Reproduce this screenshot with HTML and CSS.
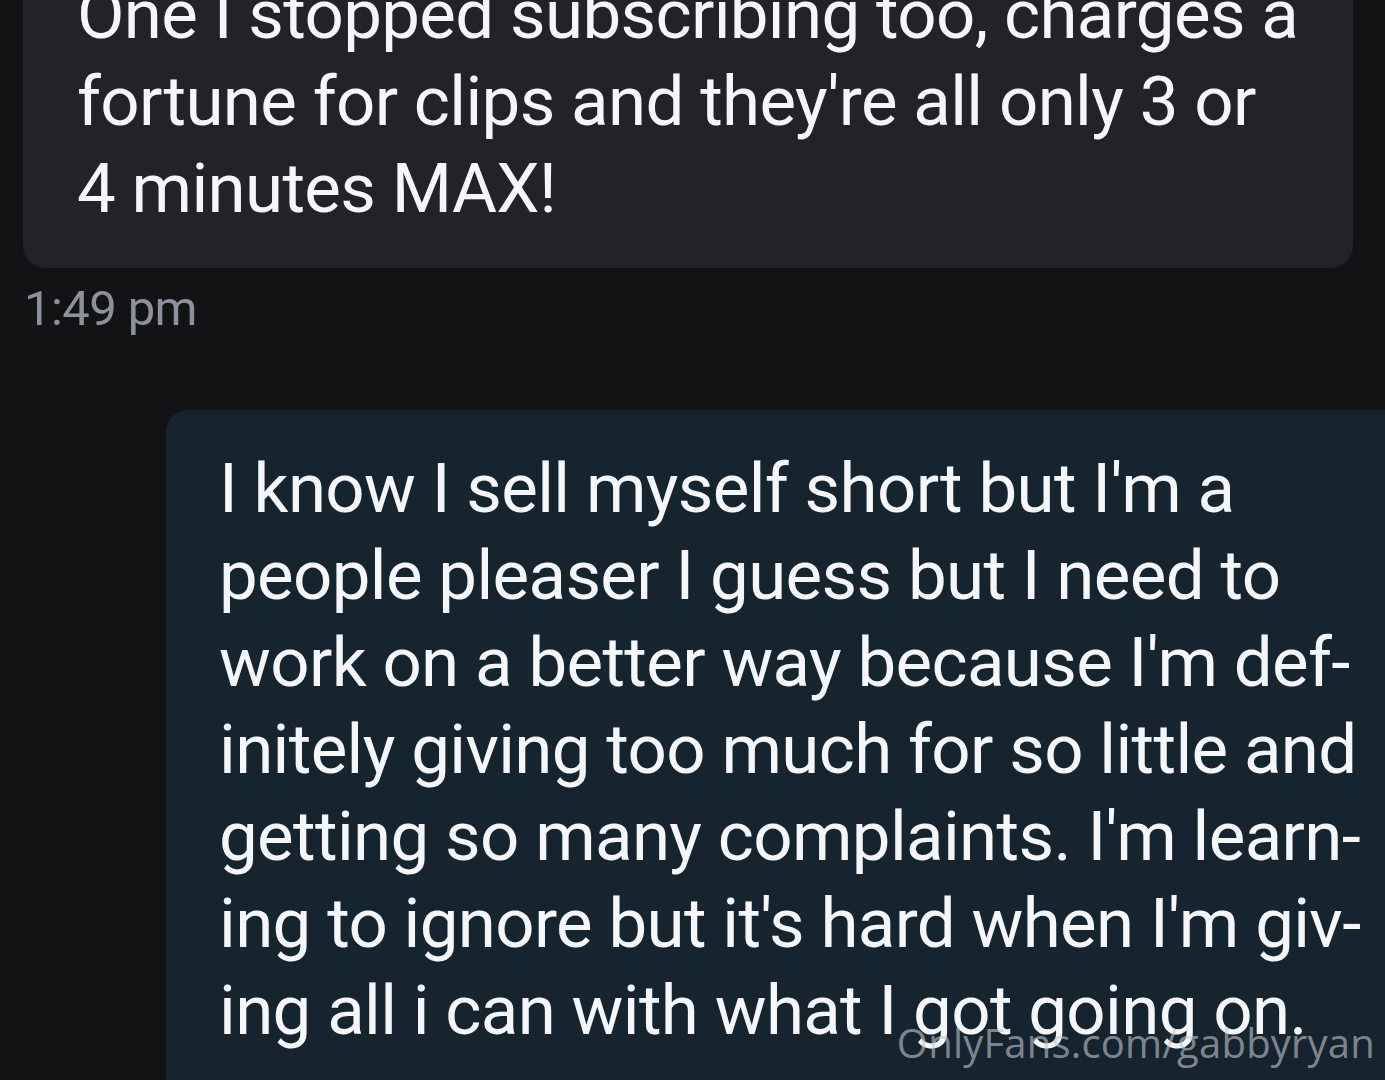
FILE: index.html
```html
<!DOCTYPE html>
<html lang="en">
<head>
    <meta charset="UTF-8">
    <meta name="viewport" content="width=device-width, initial-scale=1.0">
    <title>Messages</title>
    <link rel="stylesheet" href="styles.css">
</head>
<body>
    <div class="chat">
        <div class="msg incoming">
            <div class="bubble">
                One I stopped subscribing too, charges a<br>
                fortune for clips and they're all only 3 or<br>
                4 minutes MAX!
            </div>
            <div class="time">1:49 pm</div>
        </div>

        <div class="msg outgoing">
            <div class="bubble">
                I know I sell myself short but I'm a<br>
                people pleaser I guess but I need to<br>
                work on a better way because I'm def-<br>
                initely giving too much for so little and<br>
                getting so many complaints. I'm learn-<br>
                ing to ignore but it's hard when I'm giv-<br>
                ing all i can with what I got going on.
            </div>
        </div>
    </div>

    <div class="watermark">OnlyFans.com/gabbyryan</div>
</body>
</html>
```

FILE: styles.css
```css
html, body { margin: 0; height: 100%; }
body { background-color: #131315; color: #f4f6f9; font-family: Roboto, "Noto Sans", sans-serif; overflow: hidden; position: relative; }

.chat { display: flex; flex-direction: column; margin-top: -64px; }

.bubble {
    font-size: 69px;
    line-height: 87px;
    letter-spacing: -0.65px;
    padding: 35px 54px 36px 54px;
    box-sizing: border-box;
    white-space: nowrap;
}

.incoming .bubble {
    margin-left: 23px;
    width: 1330px;
    background-color: #222327;
    border-radius: 0 0 22px 22px;
}
.incoming .time {
    margin: 11px 0 0 24px;
    font-size: 49px;
    line-height: 59px;
    letter-spacing: -0.6px;
    color: #8b929b;
}

.outgoing { margin-top: 72px; }
.outgoing .bubble {
    margin-left: 166px;
    width: 1260px;
    background-color: #16242f;
    border-radius: 22px 0 0 0;
    padding-left: 53px;
    padding-bottom: 60px;
}

.watermark {
    position: absolute;
    right: 10px;
    bottom: 10px;
    font-family: "Open Sans", "Noto Sans", sans-serif;
    font-size: 40px;
    letter-spacing: 0.2px;
    color: rgba(196, 200, 205, 0.62);
    white-space: nowrap;
}
```
